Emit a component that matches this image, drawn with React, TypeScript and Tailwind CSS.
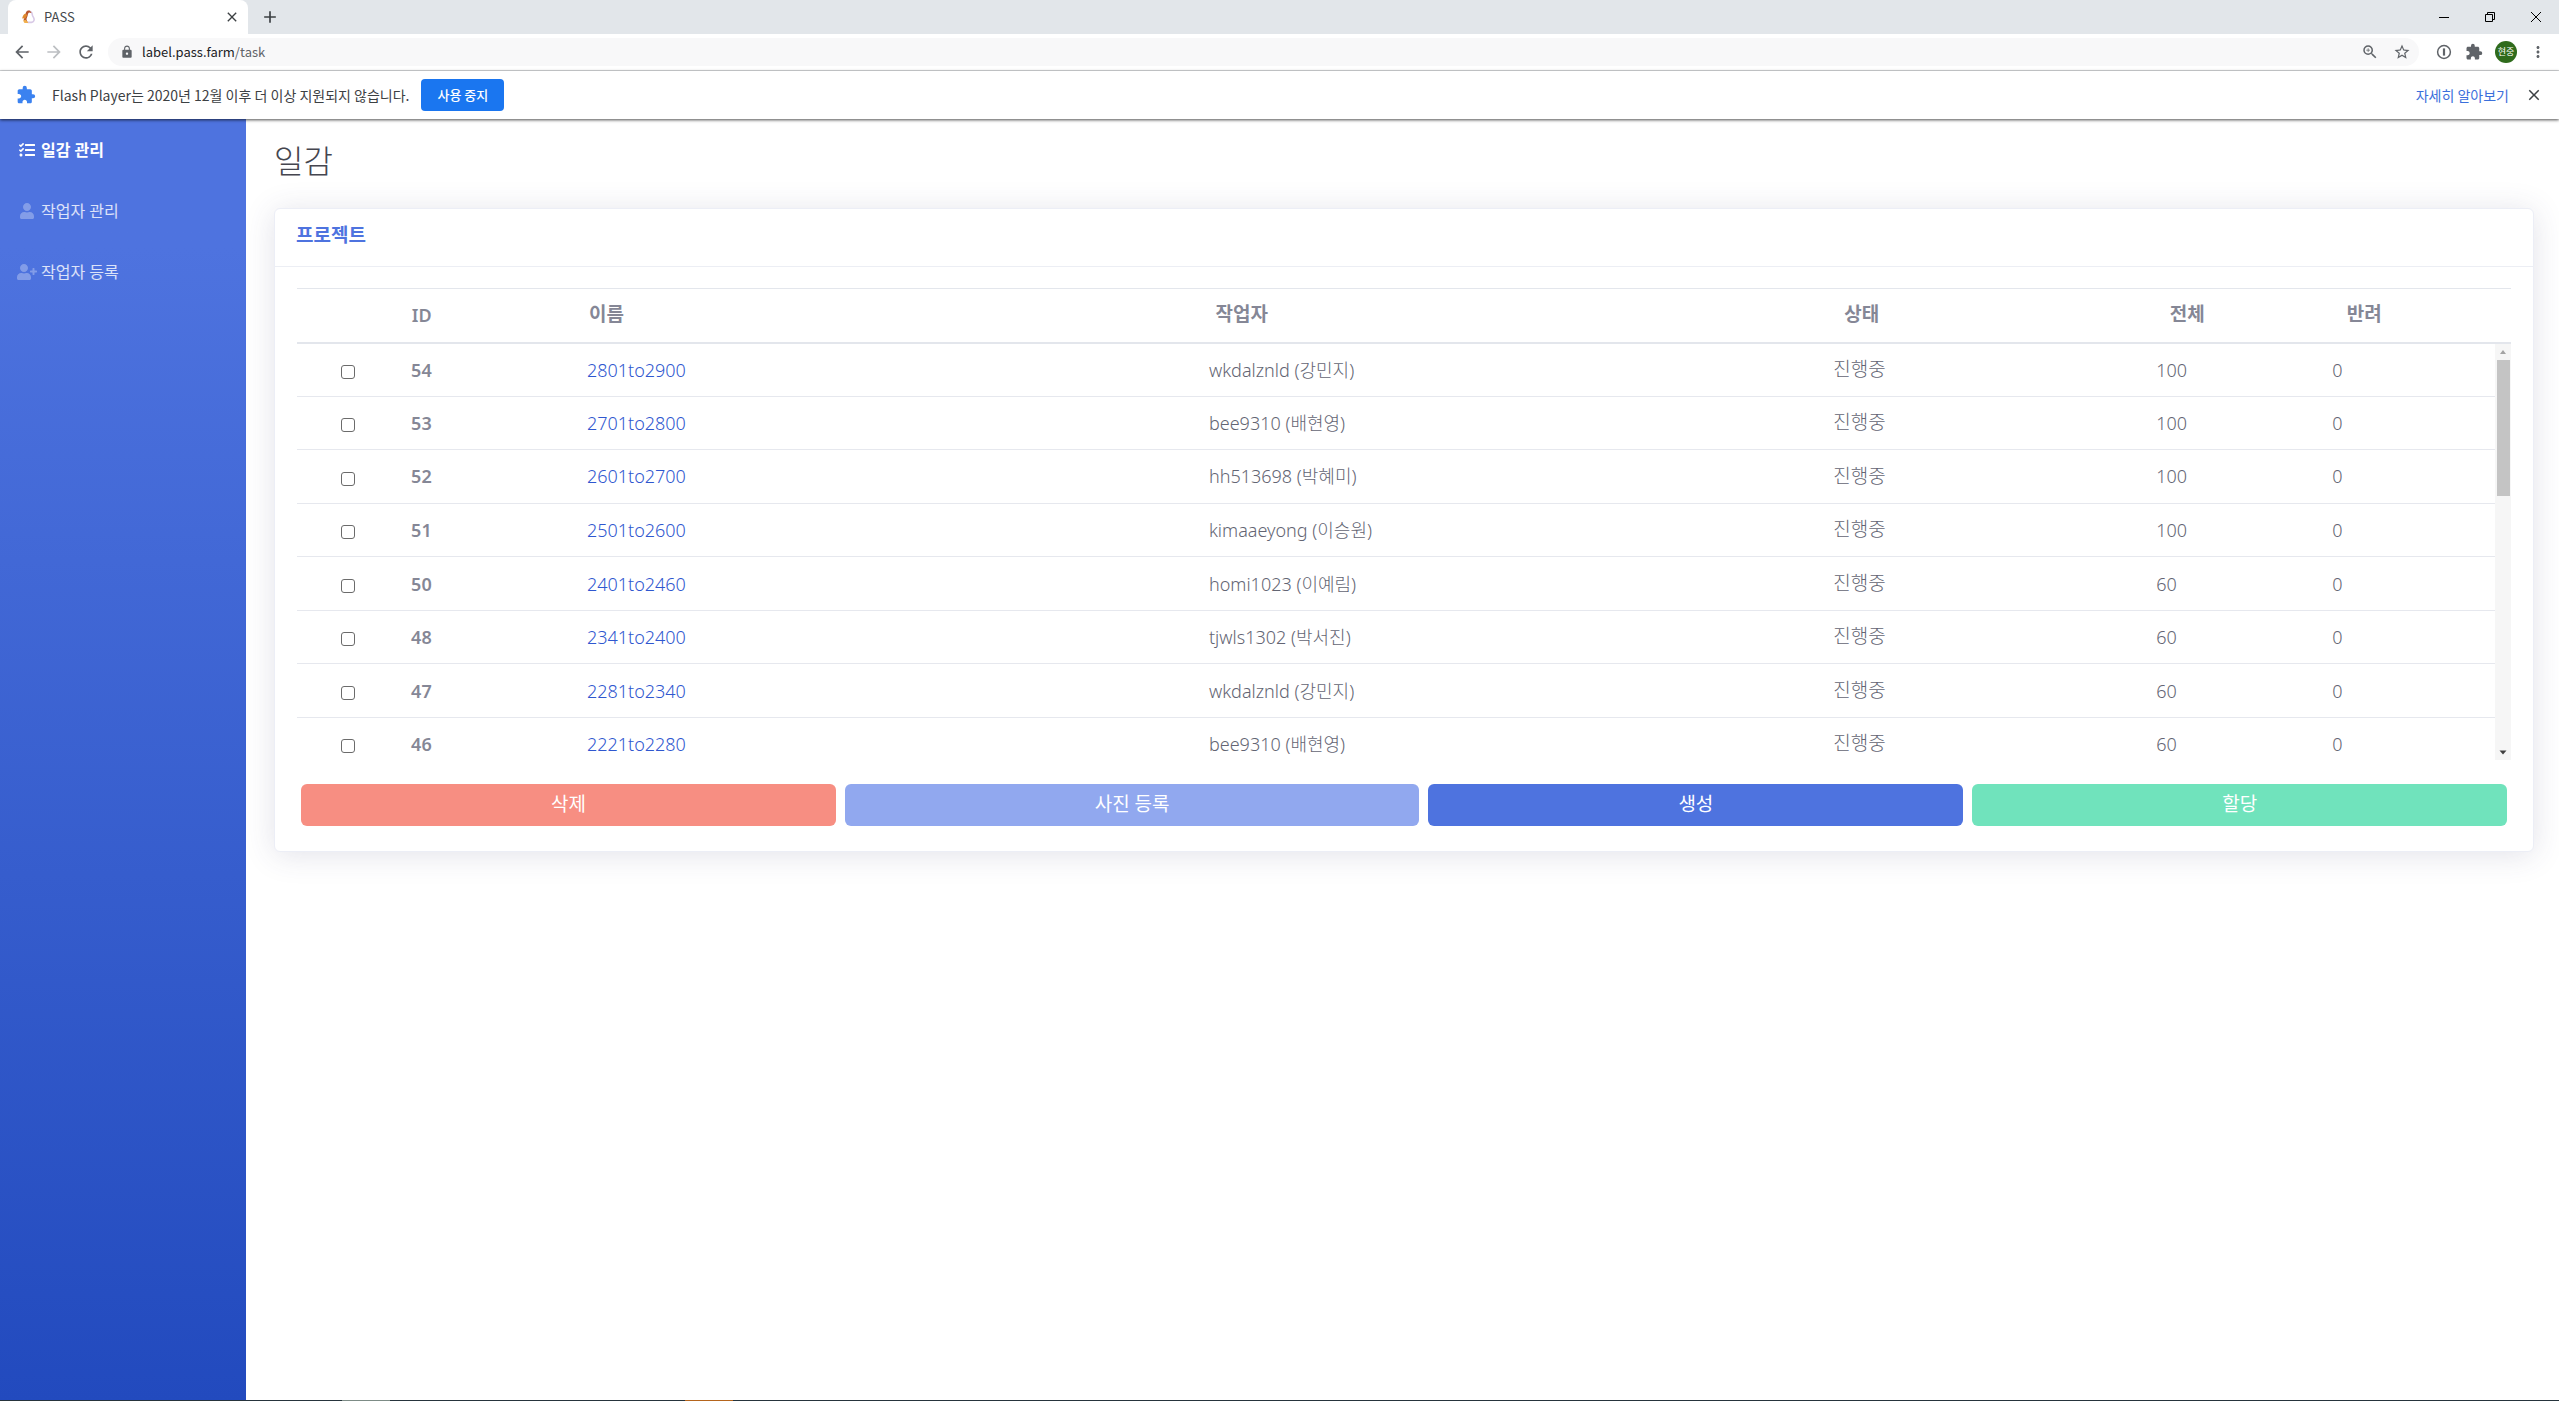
import { useState } from "react";
import { FaTasks, FaUser, FaUserPlus } from "react-icons/fa";
import {
  MdArrowBack,
  MdArrowForward,
  MdClose,
  MdExtension,
  MdLock,
  MdMoreVert,
  MdRefresh,
  MdStarBorder,
  MdZoomIn,
  MdAdd,
} from "react-icons/md";

type Project = {
  id: number;
  name: string;
  account: string;
  worker: string;
  status: string;
  total: number;
  rejected: number;
};

const projects: Project[] = [
  { id: 54, name: "2801to2900", account: "wkdalznld", worker: "강민지", status: "진행중", total: 100, rejected: 0 },
  { id: 53, name: "2701to2800", account: "bee9310", worker: "배현영", status: "진행중", total: 100, rejected: 0 },
  { id: 52, name: "2601to2700", account: "hh513698", worker: "박혜미", status: "진행중", total: 100, rejected: 0 },
  { id: 51, name: "2501to2600", account: "kimaaeyong", worker: "이승원", status: "진행중", total: 100, rejected: 0 },
  { id: 50, name: "2401to2460", account: "homi1023", worker: "이예림", status: "진행중", total: 60, rejected: 0 },
  { id: 48, name: "2341to2400", account: "tjwls1302", worker: "박서진", status: "진행중", total: 60, rejected: 0 },
  { id: 47, name: "2281to2340", account: "wkdalznld", worker: "강민지", status: "진행중", total: 60, rejected: 0 },
  { id: 46, name: "2221to2280", account: "bee9310", worker: "배현영", status: "진행중", total: 60, rejected: 0 },
];

function Columns() {
  return (
    <colgroup>
      <col className="w-[4.6%]" />
      <col className="w-[8%]" />
      <col className="w-[28.3%]" />
      <col className="w-[28.4%]" />
      <col className="w-[14.7%]" />
      <col className="w-[8%]" />
      <col className="w-[8%]" />
    </colgroup>
  );
}

function TabStrip() {
  return (
    <div className="flex h-[34px] items-stretch bg-[#e2e6ea] pl-2">
      <div className="flex w-60 items-center rounded-t-lg bg-white pr-2 pl-3 text-[13px] text-[#45494d]">
        <svg className="h-4 w-4" viewBox="0 0 16 16" fill="none">
          <path d="M8.5 2.2C10.5 2 12 3.2 12.2 5.2c.1 1.4.6 2.2 1.4 3.4 1.3 2.2.2 4.6-2.2 4.8H7.6" stroke="#d8c9e6" strokeWidth="1.6" />
          <path d="M6 3.2C6.6 1.8 8.4 1.2 10 1.8L11.6 4 9 3.6C7.4 4.6 8.2 6.6 7 8.6c-.9 1.5-.6 3 1 4.8H5C3.4 12.6 3.2 10.6 4.4 9 5.6 7 5.2 5 6 3.2Z" fill="#b9562f" />
          <path d="M5.4 4.6 7.2 6 5.6 9.2 2.2 9.6C2.4 7.4 3.6 5.4 5.4 4.6Z" fill="#e08a2e" />
          <path d="M3.4 11.4 5.6 10.8 8.4 14H5C4 13.6 3.4 12.6 3.4 11.4Z" fill="#f2b14c" />
        </svg>
        <span className="ml-2 flex-1">PASS</span>
        <button aria-label="탭 닫기">
          <MdClose className="h-4 w-4 text-[#3c4043]" />
        </button>
      </div>
      <button aria-label="새 탭" className="ml-3 text-[#3c4043]">
        <MdAdd className="h-5 w-5" />
      </button>
      <div className="ml-auto flex items-center text-black">
        <button aria-label="최소화" className="grid w-[46px] place-items-center">
          <svg className="h-2.5 w-2.5" viewBox="0 0 10 10" stroke="currentColor"><path d="M0 5.5h10" /></svg>
        </button>
        <button aria-label="이전 크기로" className="grid w-[46px] place-items-center">
          <svg className="h-2.5 w-2.5" viewBox="0 0 10 10" stroke="currentColor" fill="none">
            <path d="M.5 2.5h7v7h-7zM2.5 2.5v-2h7v7h-2" />
          </svg>
        </button>
        <button aria-label="닫기" className="grid w-[46px] place-items-center">
          <svg className="h-2.5 w-2.5" viewBox="0 0 10 10" stroke="currentColor"><path d="m0 0 10 10M10 0 0 10" /></svg>
        </button>
      </div>
    </div>
  );
}

function Toolbar() {
  return (
    <div className="flex h-[37px] items-center border-b border-[#d8dadc] bg-white px-3 text-[#5f6368]">
      <div className="flex items-center gap-3">
        <button aria-label="뒤로"><MdArrowBack className="h-5 w-5" /></button>
        <button aria-label="앞으로"><MdArrowForward className="h-5 w-5 text-[#bcbfc2]" /></button>
        <button aria-label="새로고침"><MdRefresh className="h-5 w-5" /></button>
      </div>
      <div className="ml-3 flex h-7 flex-1 items-center rounded-full bg-[#f8f8f9] pr-2 pl-3">
        <MdLock className="h-3.5 w-3.5" />
        <p className="ml-2 flex-1 text-[13px]">
          <span className="text-[#202124]">label.pass.farm</span>/task
        </p>
        <div className="flex items-center gap-3.5">
          <button aria-label="확대/축소"><MdZoomIn className="h-[18px] w-[18px]" /></button>
          <button aria-label="북마크"><MdStarBorder className="h-[18px] w-[18px]" /></button>
        </div>
      </div>
      <div className="ml-4 flex items-center gap-3">
        <button aria-label="사이트 정보">
          <svg className="h-[18px] w-[18px]" viewBox="0 0 18 18" fill="none" stroke="currentColor">
            <circle cx="9" cy="9" r="6.4" strokeWidth="1.5" />
            <path d="M9 5.4v7.2" strokeWidth="2.2" />
          </svg>
        </button>
        <button aria-label="확장 프로그램"><MdExtension className="h-[18px] w-[18px]" /></button>
        <button className="h-[22px] w-[22px] rounded-full bg-[#2f6b1c] text-[9px] text-white">현중</button>
        <button aria-label="메뉴"><MdMoreVert className="h-[18px] w-[18px]" /></button>
      </div>
    </div>
  );
}

function InfoBar() {
  return (
    <div className="relative z-10 flex h-12 items-center bg-white px-4 text-sm text-[#3c4043] shadow-[0_1px_3px_rgba(0,0,0,0.7)]">
      <MdExtension className="h-5 w-5 text-[#3b82f0]" />
      <p className="ml-4">Flash Player는 2020년 12월 이후 더 이상 지원되지 않습니다.</p>
      <button className="ml-3 h-8 rounded-sm bg-[#1a76f0] px-4 text-[13px] font-medium text-white">사용 중지</button>
      <a href="#" className="mr-4 ml-auto text-[#3b6fdb]">자세히 알아보기</a>
      <button aria-label="알림 닫기"><MdClose className="h-[18px] w-[18px]" /></button>
    </div>
  );
}

function Sidebar() {
  return (
    <nav className="w-[246px] bg-linear-to-b from-[#4e73df] from-10% to-[#224abe] text-base">
      <a href="#" className="flex h-[61px] items-center gap-1 px-[17px] font-bold text-white">
        <FaTasks className="w-5" />
        일감 관리
      </a>
      <a href="#" className="flex h-[61px] items-center gap-1 px-[17px] text-white/80">
        <FaUser className="w-5 text-white/30" />
        작업자 관리
      </a>
      <a href="#" className="flex h-[61px] items-center gap-1 px-[17px] text-white/80">
        <FaUserPlus className="w-5 text-white/30" />
        작업자 등록
      </a>
    </nav>
  );
}

function ScrollTrack() {
  return (
    <div className="flex w-4 flex-col items-center bg-[#f6f6f6]">
      <svg className="h-4 w-2" viewBox="0 0 8 16" fill="#a3a3a3"><path d="M4 6 7 10H1z" /></svg>
      <div className="h-[136px] w-[13px] bg-[#c4c4c4]" />
      <svg className="mt-auto h-4 w-2" viewBox="0 0 8 16" fill="#404040"><path d="M.5 6.5h7L4 10.5z" /></svg>
    </div>
  );
}

export default function App() {
  const [selected, setSelected] = useState<number[]>([]);

  const toggle = (id: number) => {
    setSelected((prev) => (prev.includes(id) ? prev.filter((x) => x !== id) : [...prev, id]));
  };

  return (
    <div className="flex min-h-screen flex-col bg-white font-['Noto_Sans','Noto_Sans_CJK_KR',sans-serif]">
      <header className="font-['Noto_Sans_CJK_KR',sans-serif]">
        <TabStrip />
        <Toolbar />
        <InfoBar />
      </header>

      <div className="flex flex-1">
        <Sidebar />

        <main className="flex-1 pr-[25px] pl-7 text-lg text-[#858796]">
          <h1 className="pt-[19px] pb-[25px] text-[32px] leading-[45px] font-light text-[#45464f]">일감</h1>

          <section className="rounded-md border border-[#eceef6] bg-white shadow-[0_3px_31px_rgba(58,59,105,0.15)]">
            <h2 className="border-b border-[#eceef4] px-[21px] pt-3 pb-[17px] text-[19px] leading-7 font-bold text-[#4e73df]">
              프로젝트
            </h2>

            <div className="px-[22px] pt-[21px] pb-[25px]">
              <table className="w-full table-fixed border-t border-b-2 border-[#e3e6ec] text-left">
                <Columns />
                <thead>
                  <tr className="h-[54px] text-[19px]">
                    <td />
                    <th className="px-[13px] text-lg font-semibold">ID</th>
                    <th className="px-[13px] font-semibold">이름</th>
                    <th className="px-[13px] font-semibold">작업자</th>
                    <th className="px-[13px] font-semibold">상태</th>
                    <th className="px-[13px] font-semibold">전체</th>
                    <th className="px-[13px] font-semibold">반려</th>
                  </tr>
                </thead>
              </table>

              <div className="flex h-[416px] overflow-hidden">
                <div className="flex-1">
                  <table className="h-[428px] w-full table-fixed text-left font-light text-[#636573]">
                    <Columns />
                    <tbody>
                      {projects.map((p) => (
                        <tr key={p.id} className="border-b border-[#e6e8ee]">
                          <td className="text-center leading-none">
                            <input
                              type="checkbox"
                              aria-label={p.name}
                              checked={selected.includes(p.id)}
                              onChange={() => toggle(p.id)}
                              className="h-3.5 w-3.5 appearance-none rounded-[3px] border border-[#6b6b6b] align-middle checked:border-[#1a73e8] checked:bg-[#1a73e8]"
                            />
                          </td>
                          <th className="px-[13px] font-semibold text-[#858796]">{p.id}</th>
                          <td className="px-[13px]">
                            <a href="#" className="text-[#2f57cf]">{p.name}</a>
                          </td>
                          <td className="px-[13px]">{p.account} ({p.worker})</td>
                          <td className="px-[13px] text-[19px]">{p.status}</td>
                          <td className="px-[13px]">{p.total}</td>
                          <td className="px-[13px]">{p.rejected}</td>
                        </tr>
                      ))}
                    </tbody>
                  </table>
                </div>
                <ScrollTrack />
              </div>

              <div className="mt-6 flex gap-[9px] px-1 text-[19px] text-white">
                <button className="h-[42px] flex-auto rounded-md bg-[#f78e82] px-3">삭제</button>
                <button className="h-[42px] flex-auto rounded-md bg-[#91a8ef] px-3">사진 등록</button>
                <button className="h-[42px] flex-auto rounded-md bg-[#4e73df] px-3">생성</button>
                <button className="h-[42px] flex-auto rounded-md bg-[#70e3bc] px-3">할당</button>
              </div>
            </div>
          </section>
        </main>
      </div>

      <footer className="flex h-px bg-[#26343c]">
        <div className="ml-[342px] w-12 bg-[#7d8c86]" />
        <div className="ml-[295px] w-12 bg-[#b5651d]" />
      </footer>
    </div>
  );
}
